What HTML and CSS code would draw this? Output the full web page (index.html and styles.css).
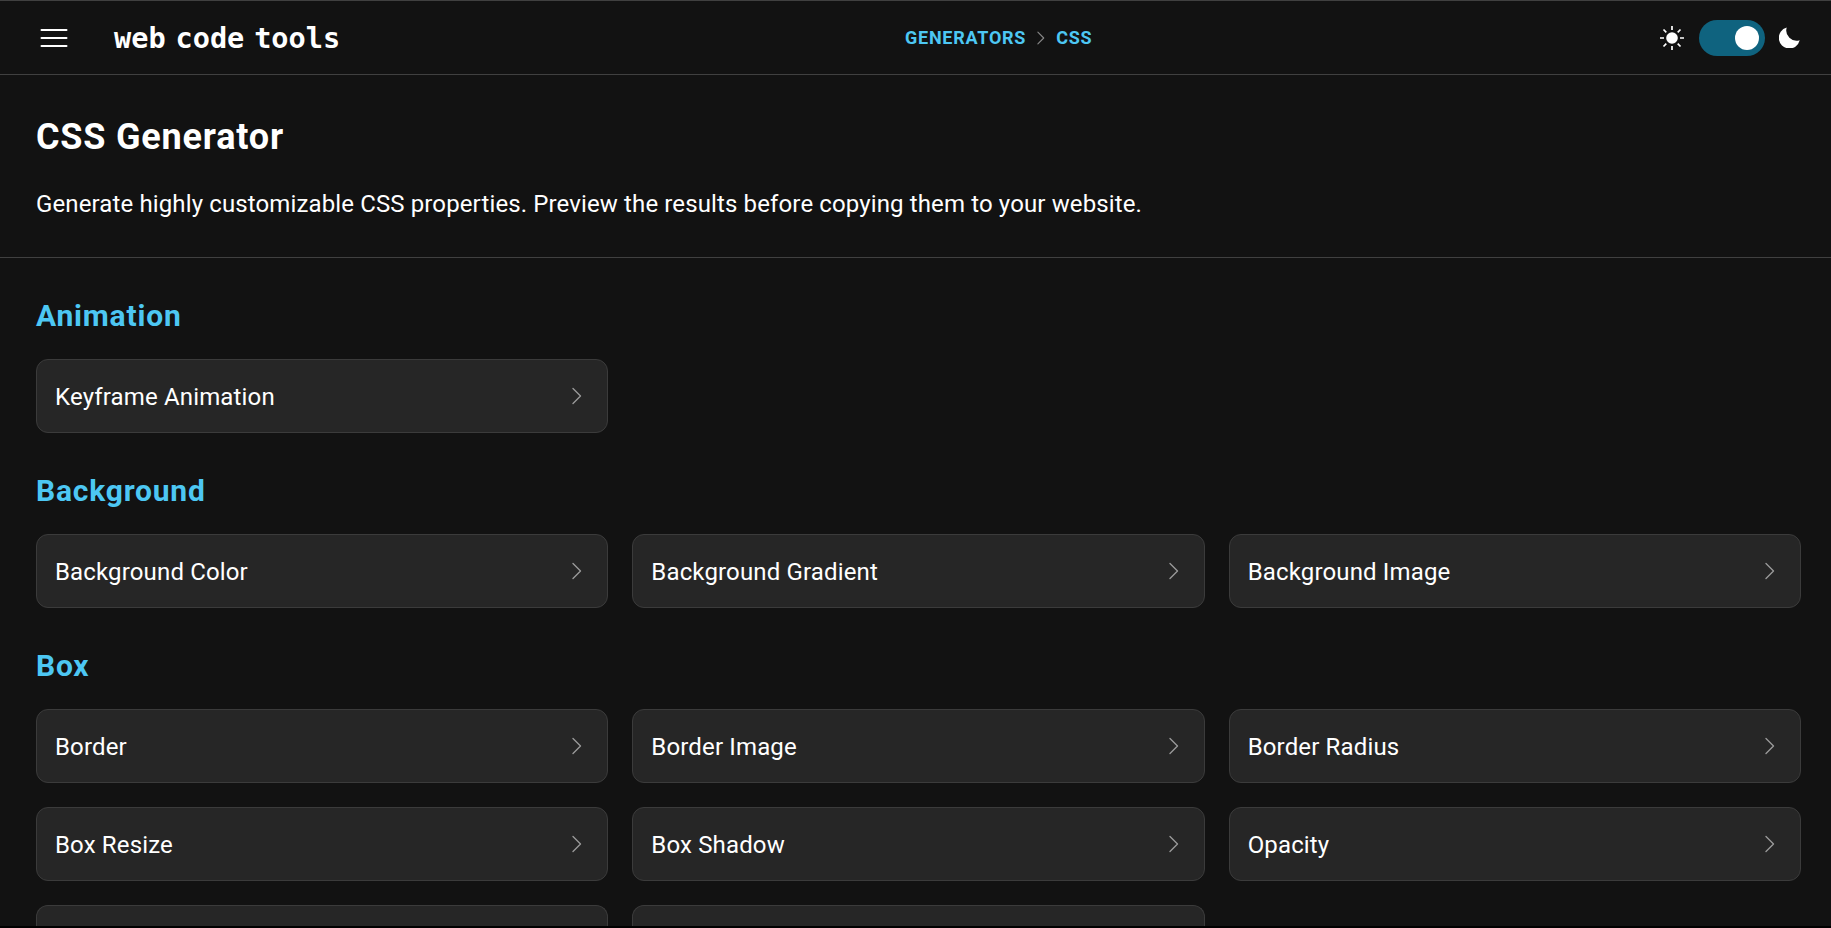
FILE: index.html
```
<!DOCTYPE html>
<html lang="en">
<head>
<meta charset="utf-8">
<title>CSS Generator</title>
<link rel="stylesheet" href="styles.css">
</head>
<body>
<svg class="defs" width="0" height="0"><symbol id="chevron" viewBox="0 0 10 18"><path d="M1 1.5 8.5 9 1 16.5" fill="none" stroke="currentColor" stroke-width="1.4" stroke-linecap="round" stroke-linejoin="round"/></symbol></svg>
<header class="topbar">
  <svg class="menu" width="28" height="20" viewBox="0 0 28 20"><path d="M1.5 2h25M1.5 10h25M1.5 18h25" stroke="#fff" stroke-width="2" stroke-linecap="round"/></svg>
  <div class="logo">web code tools</div>
  <nav class="crumbs"><a>GENERATORS</a><svg class="crumb-arrow"><use href="#chevron"/></svg><a>CSS</a></nav>
  <div class="theme">
    <svg class="sun" width="24" height="24" viewBox="0 0 24 24"><circle cx="12" cy="12" r="5.8" fill="#fff"/><path d="M12 0v4M12 20v4M0 12h4M20 12h4M3.5 3.5l2.8 2.8M17.7 17.7l2.8 2.8M20.5 3.5l-2.8 2.8M6.3 17.7l-2.8 2.8" stroke="#fff" stroke-width="1.7"/></svg>
    <div class="switch"><i></i></div>
    <svg width="21" height="21" viewBox="0 0 21 21"><path d="M7.7.6A10.6 10.6 0 1 0 20.7 13.3 10.3 10.3 0 0 1 7.7.6Z" fill="#fff"/></svg>
  </div>
</header>
<section class="hero">
  <h1>CSS Generator</h1>
  <p>Generate highly customizable CSS properties. Preview the results before copying them to your website.</p>
</section>
<main>
  <h2>Animation</h2>
  <div class="grid">
    <a class="card"><span>Keyframe Animation</span><svg><use href="#chevron"/></svg></a>
  </div>
  <h2>Background</h2>
  <div class="grid">
    <a class="card"><span>Background Color</span><svg><use href="#chevron"/></svg></a>
    <a class="card"><span>Background Gradient</span><svg><use href="#chevron"/></svg></a>
    <a class="card"><span>Background Image</span><svg><use href="#chevron"/></svg></a>
  </div>
  <h2>Box</h2>
  <div class="grid">
    <a class="card"><span>Border</span><svg><use href="#chevron"/></svg></a>
    <a class="card"><span>Border Image</span><svg><use href="#chevron"/></svg></a>
    <a class="card"><span>Border Radius</span><svg><use href="#chevron"/></svg></a>
    <a class="card"><span>Box Resize</span><svg><use href="#chevron"/></svg></a>
    <a class="card"><span>Box Shadow</span><svg><use href="#chevron"/></svg></a>
    <a class="card"><span>Opacity</span><svg><use href="#chevron"/></svg></a>
    <a class="card clipped"></a>
    <a class="card clipped"></a>
  </div>
</main>
</body>
</html>
```
FILE: styles.css
```
* { box-sizing: border-box; }
html { height: 100%; background: #000; }
body { margin: 0; height: 926px; overflow: hidden; background: #121212; color: #fff; font-family: Roboto, sans-serif; }
.defs { display: block; }
.topbar { height: 75px; border-top: 1px solid #404040; border-bottom: 1px solid #404040; display: flex; align-items: center; padding: 0 31px 0 40px; }
.logo { margin-left: 46px; width: 791px; font: bold 28.6px/36px "DejaVu Sans Mono", monospace; word-spacing: -7.4px; }
.crumbs { display: flex; align-items: center; font-size: 18px; line-height: 28px; font-weight: 700; letter-spacing: .75px; color: #4dc7f3; }
.crumb-arrow { width: 8px; height: 14px; margin: 0 11px; color: #888; }
.theme { margin-left: auto; display: flex; align-items: center; gap: 14px; }
.sun { margin-right: 1px; }
.switch { width: 66px; height: 36px; border-radius: 18px; background: #0f637f; padding: 6px; display: flex; justify-content: flex-end; }
.switch i { width: 24px; height: 24px; border-radius: 50%; background: #fff; }
.hero { height: 183px; border-bottom: 1px solid #404040; padding: 36px 36px 0; }
h1 { margin: 0; font-size: 36px; line-height: 52px; letter-spacing: .8px; }
p { margin: 23px 0 0; font-size: 24px; line-height: 36px; letter-spacing: .125px; }
main { padding: 35px 30px 0 36px; }
h2 { margin: 0 0 21px; font-size: 30px; line-height: 45px; letter-spacing: .8px; color: #4dc7f3; }
.grid { display: grid; grid-template-columns: repeat(3, 1fr); gap: 24px; margin-bottom: 35px; }
.card { height: 74px; border: 1px solid #3b3b3b; border-radius: 12px; background: #262626; display: flex; align-items: center; justify-content: space-between; padding: 0 25px 0 18px; font-size: 24px; line-height: 36px; letter-spacing: .15px; }
.card span { padding-top: 2px; }
.card svg { width: 10px; height: 18px; color: #999; }
.clipped { height: 21px; border-bottom: 0; border-radius: 12px 12px 0 0; }
.grid:last-child { margin-bottom: 0; }
```
